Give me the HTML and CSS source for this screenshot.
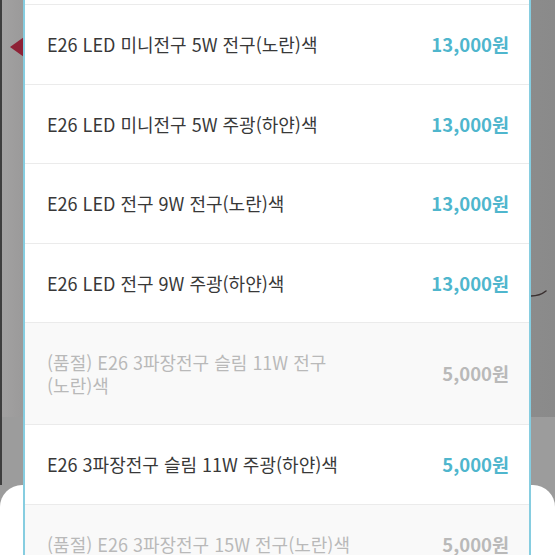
FILE: index.html
```html
<!DOCTYPE html>
<html lang="ko">
<head>
    <meta charset="UTF-8">
    <meta name="viewport" content="width=device-width, initial-scale=1.0">
    <title>옵션 선택</title>
    <link rel="stylesheet" href="styles.css">
</head>
<body>

<div class="backdrop">
    <div class="photo">
        <span class="photo-arrow"></span>
        <svg class="photo-wire" width="18" height="10" viewBox="0 0 18 10">
            <path d="M1 7 C6 7, 11 6, 16 2" stroke="#3a3030" stroke-width="1.6" fill="none" stroke-linecap="round"/>
        </svg>
    </div>
    <div class="band"></div>
    <div class="sheet"></div>
</div>

<div class="options">
    <div class="option-clip"></div>

    <div class="option">
        <span class="option-name">E26 LED 미니전구 5W 전구(노란)색</span>
        <span class="option-price">13,000원</span>
    </div>
    <div class="option">
        <span class="option-name">E26 LED 미니전구 5W 주광(하얀)색</span>
        <span class="option-price">13,000원</span>
    </div>
    <div class="option">
        <span class="option-name">E26 LED 전구 9W 전구(노란)색</span>
        <span class="option-price">13,000원</span>
    </div>
    <div class="option">
        <span class="option-name">E26 LED 전구 9W 주광(하얀)색</span>
        <span class="option-price">13,000원</span>
    </div>
    <div class="option sold-out">
        <span class="option-name">(품절) E26 3파장전구 슬림 11W 전구<span class="keep">(노란)색</span></span>
        <span class="option-price">5,000원</span>
    </div>
    <div class="option">
        <span class="option-name">E26 3파장전구 슬림 11W 주광(하얀)색</span>
        <span class="option-price">5,000원</span>
    </div>
    <div class="option sold-out">
        <span class="option-name">(품절) E26 3파장전구 15W 전구(노란)색</span>
        <span class="option-price">5,000원</span>
    </div>
</div>

</body>
</html>
```

FILE: styles.css
```css
html, body {
    height: 100%;
}

body {
    margin: 0;
    padding: 0;
    overflow: hidden;
    position: relative;
    font-family: "Noto Sans CJK KR", "Noto Sans", sans-serif;
    background-color: #9c9c9c;
}

/* dimmed page behind the option list */
.backdrop {
    display: flex;
    flex-direction: column;
    height: 100%;
}

.photo {
    position: relative;
    height: 417px;
    border-left: 2px solid #3e3e3e;
    background: linear-gradient(90deg, #a2a1a1 0, #9a9999 24px, #8c8c8c 520px, #8a8a8a 100%);
}

.photo-arrow {
    position: absolute;
    top: 37px;
    left: 8px;
    width: 0;
    height: 0;
    border-top: 10px solid transparent;
    border-bottom: 10px solid transparent;
    border-right: 14px solid #8e2236;
}

.photo-wire {
    position: absolute;
    top: 289px;
    right: 7px;
}

.band {
    height: 68px;
    border-left: 2px solid #3e3e3e;
    background-color: #9c9c9c;
}

.sheet {
    flex: 1;
    background-color: #fff;
    border-radius: 22px 22px 0 0;
}

/* option list */
.options {
    position: absolute;
    top: 0;
    bottom: 0;
    left: 23px;
    width: 504px;
    overflow: hidden;
    background-color: #fff;
    border-left: 2px solid #86cde0;
    border-right: 2px solid #86cde0;
}

.option-clip {
    height: 4px;
    border-bottom: 1px solid #ebebeb;
}

.option {
    display: flex;
    align-items: center;
    justify-content: space-between;
    padding: 28px 20px 28px 22px;
    border-bottom: 1px solid #ebebeb;
    line-height: 22.5px;
}

.option-name {
    max-width: 310px;
    font-size: 18px;
    color: #383838;
}

.option-name .keep {
    white-space: nowrap;
}

.option-price {
    font-size: 18.5px;
    font-weight: 700;
    color: #4fb6cd;
}

.option.sold-out {
    background-color: #f9f9f9;
}

.option.sold-out .option-name,
.option.sold-out .option-price {
    color: #b9b9b9;
}
```
